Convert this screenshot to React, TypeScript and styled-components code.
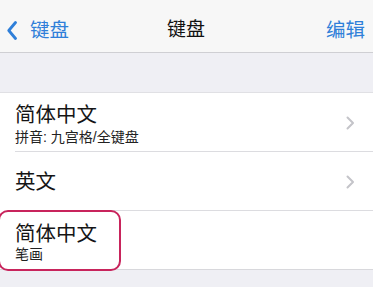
import React from "react";
import styled, { createGlobalStyle } from "styled-components";

const Global = createGlobalStyle`
  html, body { margin: 0; padding: 0; background: #ffffff; }
  body { font-family: "Liberation Sans", "Noto Sans CJK SC", sans-serif; -webkit-font-smoothing: antialiased; }
`;

const Screen = styled.div`
  position: relative;
  width: 373px;
  height: 287px;
  background: #efeff4;
  overflow: hidden;
`;

const NavBar = styled.header`
  height: 53px;
  display: grid;
  grid-template-columns: 1fr auto 1fr;
  align-items: center;
  padding: 8px 8px 0 7px;
  box-sizing: border-box;
  background: #f7f7f7;
  border-bottom: 1px solid #cfcfd3;
`;

const BackButton = styled.div`
  display: flex;
  align-items: center;
  gap: 13px;
  color: #2f7fd9;
  font-size: 19.5px;
  line-height: 24px;
`;

const NavTitle = styled.div`
  color: #111111;
  font-size: 19px;
  line-height: 24px;
`;

const NavAction = styled.div`
  justify-self: end;
  color: #2f7fd9;
  font-size: 19.5px;
  line-height: 24px;
`;

const Spacer = styled.div`
  height: 40px;
  box-sizing: border-box;
  border-bottom: 1px solid #e0e0e4;
`;

const List = styled.div`
  background: #ffffff;
  border-bottom: 1px solid #d8d8dc;
`;

const Row = styled.div<{ $last?: boolean }>`
  height: ${(p) => (p.$last ? 58 : 59)}px;
  box-sizing: border-box;
  margin-left: 15px;
  padding-right: 18px;
  display: flex;
  justify-content: space-between;
  align-items: center;
  border-bottom: ${(p) => (p.$last ? "none" : "1px solid #dcdce0")};
`;

const Texts = styled.div<{ $pad: number }>`
  align-self: flex-start;
  padding-top: ${(p) => p.$pad}px;
  display: flex;
  flex-direction: column;
`;

const Title = styled.div`
  color: #151515;
  font-size: 20.5px;
  line-height: 24px;
`;

const Subtitle = styled.div<{ $gap: number }>`
  margin-top: ${(p) => p.$gap}px;
  color: #222222;
  font-size: 14px;
  line-height: 17px;
`;

const ChevronWrap = styled.div`
  display: flex;
  margin-top: 2px;
`;

const Highlight = styled.div`
  position: absolute;
  left: -2px;
  top: 209.5px;
  width: 123px;
  height: 61px;
  box-sizing: border-box;
  border: 2.5px solid #c8245c;
  border-radius: 10px;
  pointer-events: none;
`;

const Chevron = () => (
  <svg width="9" height="14" viewBox="0 0 9 14">
    <path d="M1.5 1.5 L7 7 L1.5 12.5" fill="none" stroke="#c4c4c9" strokeWidth="2" strokeLinecap="round" strokeLinejoin="round" />
  </svg>
);

const BackChevron = () => (
  <svg width="10" height="19" viewBox="0 0 10 19">
    <path d="M8.5 1.5 L1.8 9.5 L8.5 17.5" fill="none" stroke="#2f7fd9" strokeWidth="2.8" strokeLinecap="round" strokeLinejoin="round" />
  </svg>
);

export default function App() {
  return (
    <>
      <Global />
      <Screen>
        <NavBar>
          <BackButton>
            <BackChevron />
            <span>键盘</span>
          </BackButton>
          <NavTitle>键盘</NavTitle>
          <NavAction>编辑</NavAction>
        </NavBar>
        <Spacer />
        <List>
          <Row>
            <Texts $pad={10}>
              <Title>简体中文</Title>
              <Subtitle $gap={2}>拼音: 九宫格/全键盘</Subtitle>
            </Texts>
            <ChevronWrap>
              <Chevron />
            </ChevronWrap>
          </Row>
          <Row>
            <Texts $pad={18}>
              <Title>英文</Title>
            </Texts>
            <ChevronWrap>
              <Chevron />
            </ChevronWrap>
          </Row>
          <Row $last>
            <Texts $pad={11}>
              <Title>简体中文</Title>
              <Subtitle $gap={0}>笔画</Subtitle>
            </Texts>
          </Row>
        </List>
        <Highlight />
      </Screen>
    </>
  );
}
